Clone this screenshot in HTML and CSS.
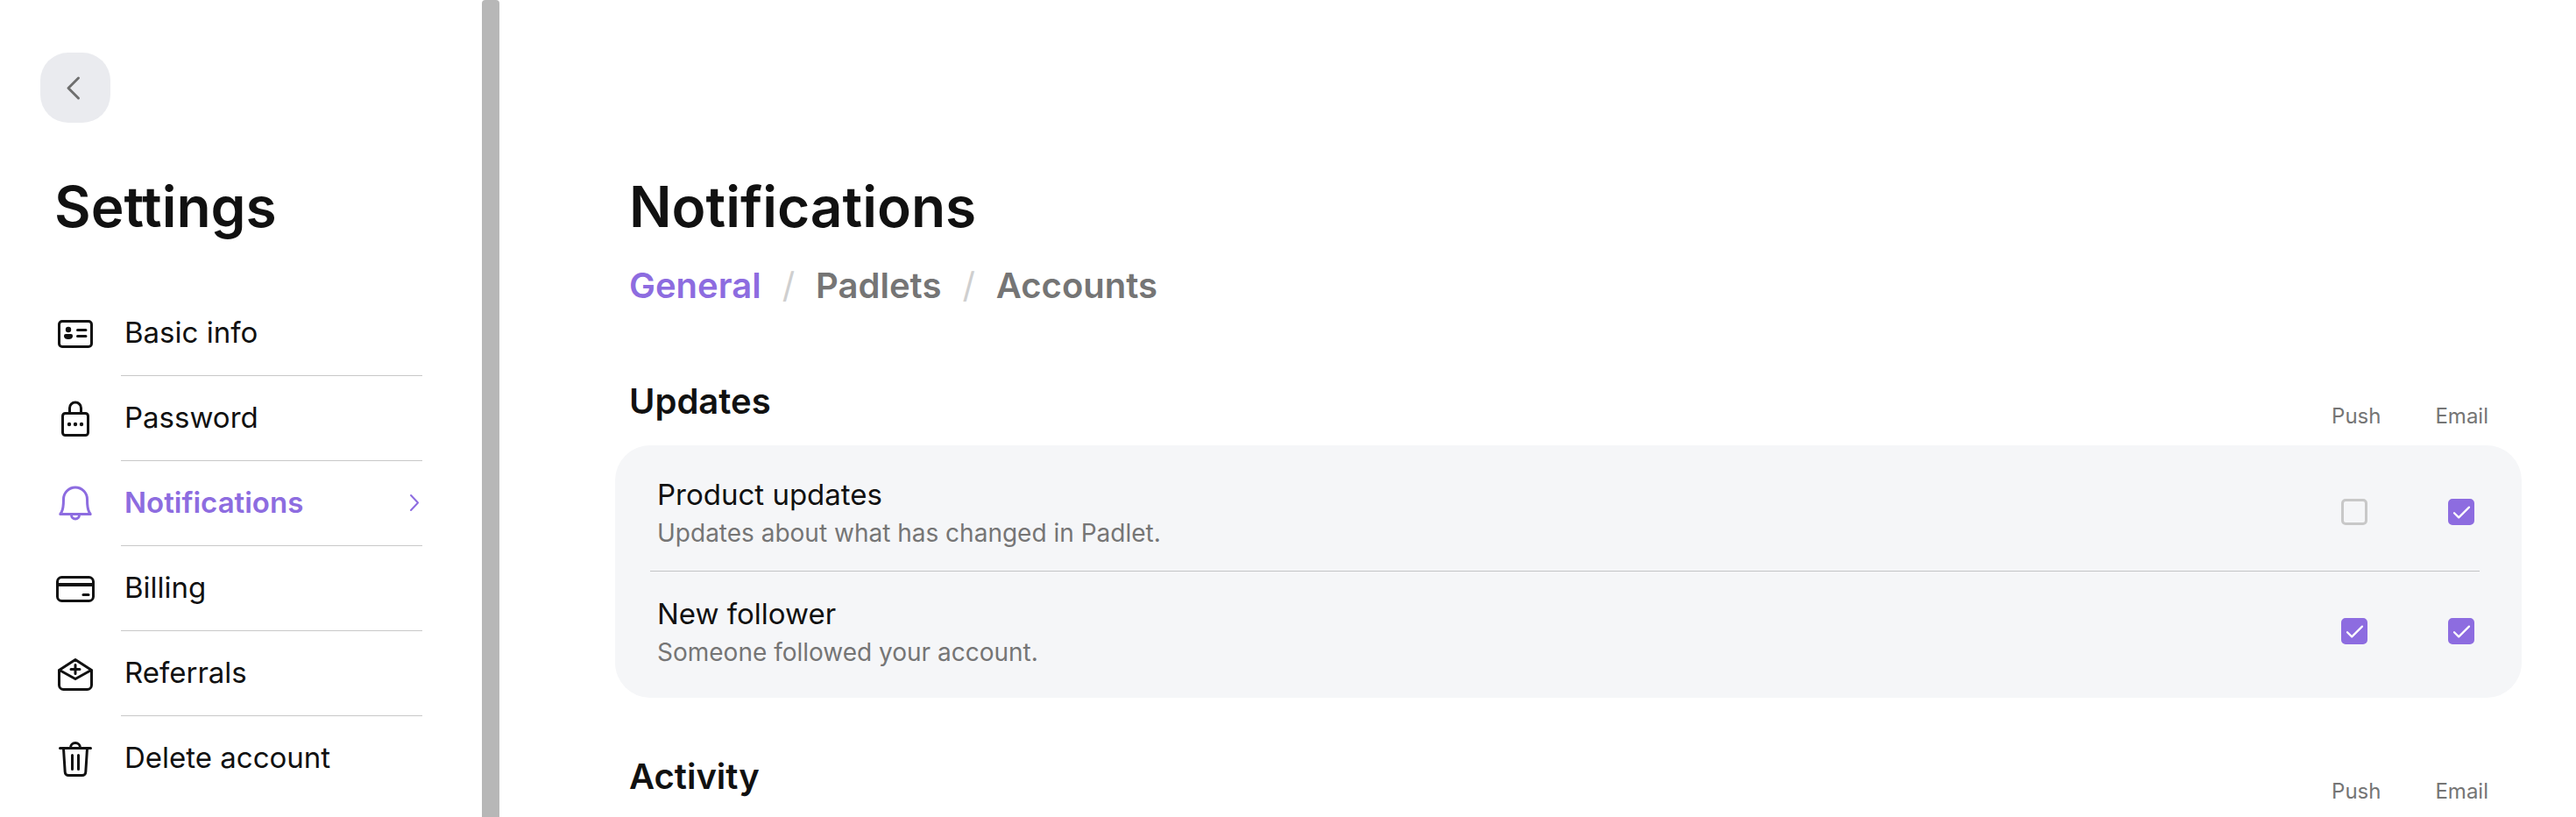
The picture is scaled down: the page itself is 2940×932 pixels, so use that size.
FILE: index.html
```html
<!DOCTYPE html>
<html lang="en">
<head>
  <meta charset="UTF-8" />
  <title>Settings – Notifications</title>
  <meta name="viewport" content="width=device-width, initial-scale=1" />
  <link rel="stylesheet" href="styles.css">
</head>
<body>
<div class="layout">
  <aside class="sidebar">
    <button class="back-btn" type="button" aria-label="Back">
      <svg viewBox="0 0 80 80" width="80" height="80"><path d="M43.500 29L32 40.500L43.500 52"/></svg>
    </button>

    <h1 class="title">Settings</h1>

    <nav class="menu" aria-label="Settings">
      <a class="menu-item" href="#basic-info">
        <svg class="menu-icon" viewBox="0 0 48 48">
          <rect x="5.500" y="10.500" width="37" height="29" rx="3.500"/>
          <circle class="solid" cx="16" cy="20" r="3.200"/>
          <path class="solid" d="M11 27a2 2 0 0 1 2-2h6a2 2 0 0 1 2 2c0 3-2 4-5 4s-5-1-5-4z"/>
          <path d="M26.500 20.500h9.500M26.500 27.500h9.500"/>
        </svg>
        <span class="menu-label">Basic info</span>
      </a>
      <a class="menu-item" href="#password">
        <svg class="menu-icon" viewBox="0 0 48 48">
          <rect x="9.500" y="18.500" width="29" height="25" rx="3"/>
          <path d="M17.500 18v-5.500a6.500 6.500 0 0 1 13 0V18"/>
          <circle class="solid" cx="17" cy="31" r="2.200"/>
          <circle class="solid" cx="24" cy="31" r="2.200"/>
          <circle class="solid" cx="31" cy="31" r="2.200"/>
        </svg>
        <span class="menu-label">Password</span>
      </a>
      <a class="menu-item active" href="#notifications" aria-current="page">
        <svg class="menu-icon" viewBox="0 0 48 48">
          <path d="M10.500 19.500a13.500 13.500 0 0 1 27 0c0 7 .3 11 2.200 14.500l1.500 2.600H6.800L8.300 34c1.900-3.500 2.200-7.500 2.200-14.500z"/>
          <path d="M19.500 37.500a4.500 4.500 0 0 0 9 0"/>
        </svg>
        <span class="menu-label">Notifications
          <svg class="menu-arrow" viewBox="0 0 12 18" width="12" height="18"><path d="M2 1L10 9.500L2 18"/></svg>
        </span>
      </a>
      <a class="menu-item" href="#billing">
        <svg class="menu-icon" viewBox="0 0 48 48">
          <rect x="3.500" y="11.500" width="41" height="27" rx="5"/>
          <path class="stripe" d="M4 20h40"/>
          <path d="M33 31.500h6"/>
        </svg>
        <span class="menu-label">Billing</span>
      </a>
      <a class="menu-item" href="#referrals">
        <svg class="menu-icon" viewBox="0 0 48 48">
          <path d="M5.500 20.500L24 8.500l18.500 12v17a5 5 0 0 1-5 5h-27a5 5 0 0 1-5-5z"/>
          <path d="M6 20.500l18 10 18-10"/>
          <path d="M24 14.500v10M19 19.500h10"/>
        </svg>
        <span class="menu-label">Referrals</span>
      </a>
      <a class="menu-item" href="#delete-account">
        <svg class="menu-icon" viewBox="0 0 48 48">
          <path d="M6.500 12.500h35M18.500 12a5.500 5.500 0 0 1 11 0"/>
          <path d="M10.500 13l1.700 26.500a4 4 0 0 0 4 4h15.600a4 4 0 0 0 4-4L37.500 13"/>
          <path d="M20.500 20.500v16M27.500 20.500v16"/>
        </svg>
        <span class="menu-label">Delete account</span>
      </a>
    </nav>
  </aside>

  <div class="divider"></div>

  <main class="content">
    <h1 class="title">Notifications</h1>

    <nav class="tabs" aria-label="Notifications">
      <a class="tab active" href="#general">General</a>
      <span class="slash">/</span>
      <a class="tab" href="#padlets">Padlets</a>
      <span class="slash">/</span>
      <a class="tab" href="#accounts">Accounts</a>
    </nav>

    <section class="group">
      <div class="group-head">
        <h2>Updates</h2>
        <span class="channel" id="push">Push</span>
        <span class="channel" id="email">Email</span>
      </div>
      <div class="card">
        <div class="row">
          <div class="row-text">
            <div class="row-title" id="product-updates">Product updates</div>
            <div class="row-desc">Updates about what has changed in Padlet.</div>
          </div>
          <input type="checkbox" aria-labelledby="product-updates push">
          <input type="checkbox" aria-labelledby="product-updates email" checked>
        </div>
        <div class="row">
          <div class="row-text">
            <div class="row-title" id="new-follower">New follower</div>
            <div class="row-desc">Someone followed your account.</div>
          </div>
          <input type="checkbox" aria-labelledby="new-follower push" checked>
          <input type="checkbox" aria-labelledby="new-follower email" checked>
        </div>
      </div>
    </section>

    <section class="group">
      <div class="group-head">
        <h2>Activity</h2>
        <span class="channel">Push</span>
        <span class="channel">Email</span>
      </div>
    </section>
  </main>
</div>
</body>
</html>
```
FILE: styles.css
```css
:root {
  --purple: #8d6ce0;
  --text: #111111;
  --muted: #757575;
  --line: #c8c8c8;
  --card: #f5f6f8;
}
*, *::before, *::after {
  box-sizing: border-box;
}
body {
  margin: 0;
  font-family: Inter, 'Liberation Sans', sans-serif;
  font-variant-ligatures: none;
  font-size: 33px;
  color: var(--text);
  background: #fff;
}
a {
  color: inherit;
  text-decoration: none;
}
svg {
  fill: none;
  stroke: currentColor;
  stroke-width: 3;
  stroke-linecap: round;
  stroke-linejoin: round;
}
.solid {
  fill: currentColor;
  stroke: none;
}
.layout {
  display: flex;
  height: 100vh;
  overflow: hidden;
}

/* sidebar */
.sidebar {
  flex: 0 0 550px;
  padding: 60px 68px 0 62px;
}
.back-btn {
  display: block;
  width: 80px;
  height: 80px;
  margin: 0 0 56px -16px;
  padding: 0;
  border: none;
  border-radius: 32px;
  background: #eaebef;
  color: #6f6f6f;
  cursor: pointer;
}
.back-btn svg {
  display: block;
}
.title {
  margin: 0;
  font-size: 64px;
  line-height: 80px;
  font-weight: 600;
}
.menu {
  margin-top: 56px;
}
.menu-item {
  display: flex;
  align-items: center;
  gap: 28px;
}
.menu-icon {
  width: 48px;
  height: 48px;
  flex: none;
  margin-bottom: 2px;
}
.stripe {
  stroke-width: 4;
  stroke-linecap: butt;
}
.menu-label {
  flex: 1;
  display: flex;
  align-items: center;
  justify-content: space-between;
  height: 97px;
  padding: 0 3px 2px 4px;
  border-bottom: 1px solid var(--line);
}
.menu-item:last-child .menu-label {
  border-bottom-color: transparent;
}
.menu-item.active {
  color: var(--purple);
  font-weight: 600;
}
.menu-arrow {
  stroke-width: 2;
  overflow: visible;
}

.divider {
  flex: 0 0 20px;
  background: #b7b7b7;
  border-radius: 4px 4px 0 0;
}

/* main column */
.content {
  flex: 1;
  padding: 196px 62px 0 132px;
}
.content > .title,
.tabs {
  padding-left: 16px;
}
.tabs {
  display: flex;
  gap: 24px;
  margin-top: 26px;
  font-size: 40px;
  line-height: 48px;
  font-weight: 600;
  color: var(--muted);
}
.tab.active {
  color: var(--purple);
}
.slash {
  color: #cfcfcf;
  font-weight: 400;
}
.group {
  margin-top: 66px;
}
.tabs + .group {
  margin-top: 84px;
}
.group-head {
  display: flex;
  align-items: flex-end;
  gap: 62px;
  padding: 0 38px 17px 16px;
}
h2 {
  flex: 1;
  margin: 0 0 9px;
  font-size: 40px;
  line-height: 48px;
  font-weight: 600;
}
.channel {
  font-size: 24px;
  line-height: 32px;
  color: var(--muted);
}
.card {
  padding: 8px 48px 8px 40px;
  border-radius: 40px;
  background: var(--card);
}
.row {
  display: flex;
  align-items: center;
  gap: 92px;
  height: 136px;
  padding: 0 6px 0 8px;
}
.row:not(:last-child) {
  box-shadow: inset 0 -1px 0 #c2c4c6;
}
.row-text {
  flex: 1;
}
.row-title {
  line-height: 44px;
}
.row-desc {
  margin-top: 4px;
  font-size: 28px;
  line-height: 36px;
  color: var(--muted);
}
input[type="checkbox"] {
  appearance: none;
  width: 30px;
  height: 30px;
  margin: 0;
  border: 3px solid var(--line);
  border-radius: 5px;
  cursor: pointer;
}
input[type="checkbox"]:checked {
  border-color: var(--purple);
  background: var(--purple) url("data:image/svg+xml,%3Csvg xmlns='http://www.w3.org/2000/svg' viewBox='0 0 30 30'%3E%3Cpath d='M7 16.200L12.200 21.400L24 9.600' fill='none' stroke='white' stroke-width='2.200' stroke-linecap='round' stroke-linejoin='round'/%3E%3C/svg%3E") center / 30px 30px no-repeat border-box;
}
```
